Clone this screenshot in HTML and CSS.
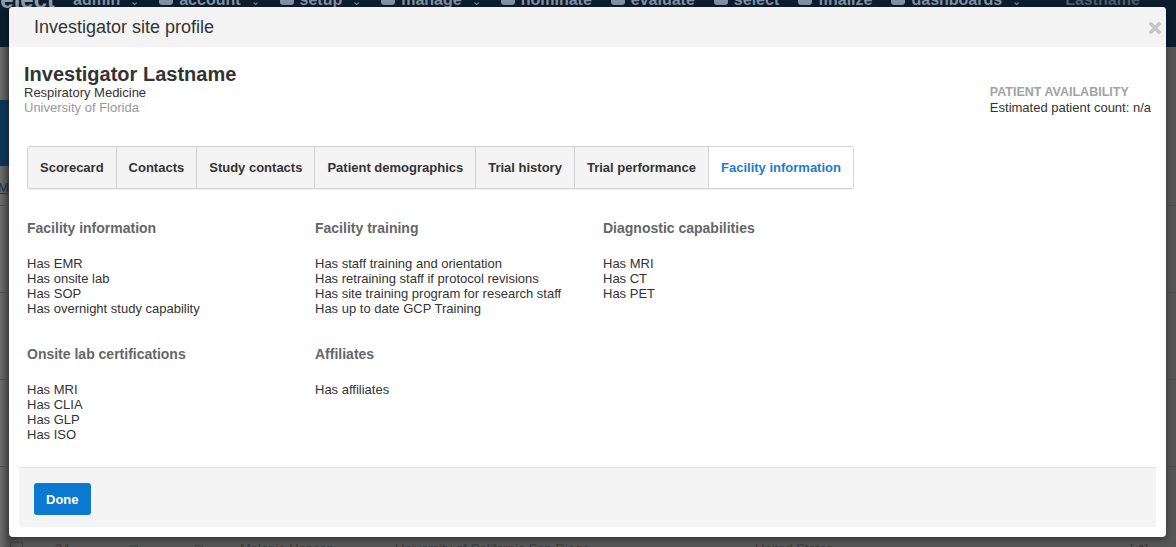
FILE: index.html
```html
<!DOCTYPE html>
<html lang="en">
<head>
<meta charset="utf-8">
<title>Investigator site profile</title>
<link rel="stylesheet" href="styles.css">
</head>
<body>
<div class="page">
  <header class="topnav">
    <div class="navrow">
      <span class="logo">select</span>
      <span class="nav-item">admin <span class="chev">&#8964;</span></span>
      <span class="nav-item"><span class="nav-ico"></span>account <span class="chev">&#8964;</span></span>
      <span class="nav-item"><span class="nav-ico"></span>setup <span class="chev">&#8964;</span></span>
      <span class="nav-item"><span class="nav-ico"></span>manage <span class="chev">&#8964;</span></span>
      <span class="nav-item"><span class="nav-ico"></span>nominate</span>
      <span class="nav-item"><span class="nav-ico"></span>evaluate</span>
      <span class="nav-item"><span class="nav-ico"></span>select</span>
      <span class="nav-item"><span class="nav-ico"></span>finalize</span>
      <span class="nav-item"><span class="nav-ico"></span>dashboards <span class="chev">&#8964;</span></span>
      <span class="nav-user">Lastname</span>
      <span class="avatar">LK</span>
    </div>
  </header>
  <div class="page-body">
    <div class="banner"></div>
    <div class="subtabs"><span class="sub-link">My sites</span></div>
    <div class="bg-rows">
      <div class="bg-row"></div>
      <div class="bg-row"></div>
      <div class="bg-row"></div>
    </div>
    <div class="table-row">
      <span class="cb"></span>
      <span class="tcell c1">24</span>
      <span class="tcell c2">&#9633;</span>
      <span class="tcell c3">&#9633;</span>
      <span class="tcell c4">Melanie Hansen</span>
      <span class="tcell c5">University of California San Diego</span>
      <span class="tcell c6">United States</span>
      <span class="tcell c7">[&#8599;]</span>
    </div>
  </div>
</div>

<div class="modal" role="dialog" aria-labelledby="modal-title">
  <div class="modal-header">
    <h1 class="modal-title" id="modal-title">Investigator site profile</h1>
    <button class="close" aria-label="Close">
      <svg width="12" height="12" viewBox="0 0 12 12" aria-hidden="true">
        <path d="M2 2 L10 10 M10 2 L2 10" stroke="#c6c6c6" stroke-width="3.4" stroke-linecap="square" fill="none"/>
      </svg>
    </button>
  </div>

  <div class="modal-body">
    <div class="profile">
      <div class="who">
        <div class="name">Investigator Lastname</div>
        <div class="dept">Respiratory Medicine</div>
        <div class="inst">University of Florida</div>
      </div>
      <div class="availability">
        <div class="avail-label">PATIENT AVAILABILITY</div>
        <div class="avail-value">Estimated patient count: n/a</div>
      </div>
    </div>

    <nav class="tabs">
      <span class="tab">Scorecard</span>
      <span class="tab">Contacts</span>
      <span class="tab">Study contacts</span>
      <span class="tab">Patient demographics</span>
      <span class="tab">Trial history</span>
      <span class="tab">Trial performance</span>
      <span class="tab active">Facility information</span>
    </nav>

    <div class="sections">
      <section class="sec">
        <h2 class="sec-title">Facility information</h2>
        <ul class="sec-list">
          <li>Has EMR</li>
          <li>Has onsite lab</li>
          <li>Has SOP</li>
          <li>Has overnight study capability</li>
        </ul>
      </section>
      <section class="sec">
        <h2 class="sec-title">Facility training</h2>
        <ul class="sec-list">
          <li>Has staff training and orientation</li>
          <li>Has retraining staff if protocol revisions</li>
          <li>Has site training program for research staff</li>
          <li>Has up to date GCP Training</li>
        </ul>
      </section>
      <section class="sec">
        <h2 class="sec-title">Diagnostic capabilities</h2>
        <ul class="sec-list">
          <li>Has MRI</li>
          <li>Has CT</li>
          <li>Has PET</li>
        </ul>
      </section>
      <section class="sec">
        <h2 class="sec-title">Onsite lab certifications</h2>
        <ul class="sec-list">
          <li>Has MRI</li>
          <li>Has CLIA</li>
          <li>Has GLP</li>
          <li>Has ISO</li>
        </ul>
      </section>
      <section class="sec">
        <h2 class="sec-title">Affiliates</h2>
        <ul class="sec-list">
          <li>Has affiliates</li>
        </ul>
      </section>
    </div>
  </div>

  <div class="modal-footer">
    <button class="btn-done">Done</button>
  </div>
</div>
</body>
</html>
```

FILE: styles.css
```css
* { box-sizing: border-box; }

html, body {
  margin: 0;
  padding: 0;
  height: 547px;
  overflow: hidden;
}

body {
  background: #585858;
  font-family: "Liberation Sans", Arial, sans-serif;
  position: relative;
}

/* ---------- backdrop page (dimmed) ---------- */
.page {
  height: 547px;
  display: flex;
  flex-direction: column;
}

.topnav {
  height: 47px;
  background: #0c1d2e;
  overflow: hidden;
  flex: none;
}

.navrow {
  display: flex;
  align-items: flex-start;
  margin-top: -8px;
  color: #8191a3;
  font-weight: bold;
  font-size: 16px;
  line-height: 16px;
  white-space: nowrap;
}

.logo {
  font-size: 24px;
  color: #8c9db0;
  margin-left: -13px;
  margin-right: 18px;
}

.nav-item {
  display: inline-flex;
  align-items: baseline;
  gap: 6px;
  margin-right: 19px;
}

.nav-ico {
  display: inline-block;
  width: 14px;
  height: 10px;
  background: #8191a3;
  border-radius: 3px;
}

.chev {
  display: inline-block;
  width: 10px;
  overflow: hidden;
  font-size: 11px;
  font-weight: normal;
  margin-left: 4px;
}

.nav-user {
  margin-left: 24px;
  color: #4f5e6e;
}

.avatar {
  margin-left: 40px;
  margin-top: -14px;
  width: 36px;
  height: 36px;
  border-radius: 50%;
  background: #12497a;
  color: #7fa0c0;
  font-size: 14px;
  line-height: 14px;
  display: inline-flex;
  align-items: flex-end;
  justify-content: center;
}

.page-body {
  flex: 1;
  display: flex;
  flex-direction: column;
  background: linear-gradient(90deg, #6c6c6c 0, #4a4a4a 9px, #555 20px);
}

.banner {
  margin-top: 53px;
  height: 66px;
  width: 40%;
  background: #0d3254;
  flex: none;
}

.subtabs {
  padding-top: 12px;
  height: 40px;
  border-bottom: 1px solid #4d4d4d;
  flex: none;
}

.sub-link {
  color: #1b2f46;
  font-size: 13px;
  text-decoration: underline;
  margin-left: -2px;
}

.bg-rows {
  flex: 1;
  display: flex;
  flex-direction: column;
}

.bg-row {
  height: 87px;
  border-bottom: 1px solid #4c4c4c;
}

.table-row {
  flex: none;
  height: 10px;
  display: flex;
  align-items: flex-start;
  padding-top: 5px;
  color: #3a3a3a;
  font-size: 13px;
  line-height: 13px;
  white-space: nowrap;
  overflow: hidden;
}

.cb {
  width: 13px;
  height: 13px;
  border: 1px solid #3e3e3e;
  margin-left: 10px;
}

.tcell { display: inline-block; }
.c1 { margin-left: 32px; width: 60px; }
.c2 { margin-left: 15px; width: 65px; }
.c3 { width: 45px; }
.c4 { width: 155px; }
.c5 { width: 360px; }
.c6 { width: 375px; }

/* ---------- modal ---------- */
.modal {
  position: absolute;
  top: 7px;
  left: 9px;
  width: 1157px;
  height: 530px;
  background: #fff;
  border-radius: 4px;
  box-shadow: 0 2px 6px rgba(0, 0, 0, 0.4);
  display: flex;
  flex-direction: column;
  overflow: hidden;
}

.modal-header {
  height: 40px;
  flex: none;
  background: #f3f3f3;
  display: flex;
  align-items: center;
  justify-content: space-between;
  padding: 0 5px 0 25px;
}

.modal-title {
  margin: 0;
  font-size: 18px;
  font-weight: normal;
  color: #333;
  line-height: 22px;
}

.close {
  border: 0;
  background: none;
  padding: 0;
  width: 12px;
  height: 12px;
  margin-top: 2px;
  display: flex;
}

.modal-body {
  flex: 1;
  padding: 16px 15px 0 15px;
}

.profile {
  display: flex;
  justify-content: space-between;
  align-items: flex-end;
}

.name {
  font-size: 20px;
  font-weight: bold;
  line-height: 22px;
  color: #333;
}

.dept, .inst, .avail-value {
  font-size: 13px;
  line-height: 15px;
  color: #333;
}

.inst { color: #999; }

.avail-label {
  font-size: 12.5px;
  font-weight: bold;
  line-height: 15px;
  color: #a3a3a3;
}

.tabs {
  display: inline-flex;
  margin: 31px 0 0 3px;
  border: 1px solid #d3d3d3;
  border-radius: 3px;
  background: #f4f4f4;
  box-shadow: 0 1px 1px rgba(0, 0, 0, 0.06);
  overflow: hidden;
}

.tab {
  padding: 0 12px;
  line-height: 41px;
  font-size: 13px;
  font-weight: bold;
  color: #333;
  border-left: 1px solid #d3d3d3;
  white-space: nowrap;
}

.tab:first-child { border-left: 0; }

.tab.active {
  background: #fff;
  color: #1b7dd0;
}

.sections {
  display: grid;
  grid-template-columns: repeat(3, 288px);
  row-gap: 30px;
  margin: 31px 0 0 3px;
}

.sec-title {
  margin: 0 0 20px;
  font-size: 14px;
  line-height: 16px;
  font-weight: bold;
  color: #666;
}

.sec-list {
  list-style: none;
  margin: 0;
  padding: 0;
  font-size: 13px;
  line-height: 15px;
  color: #333;
}

.modal-footer {
  flex: none;
  margin: 0 10px 10px;
  background: #f4f4f4;
  border-top: 1px solid #e3e3e3;
  padding: 15px 15px 12px;
  display: flex;
}

.btn-done {
  height: 32px;
  padding: 0 12px;
  border: 0;
  border-radius: 3px;
  background: #0b79cf;
  color: #fff;
  font-family: "Liberation Sans", Arial, sans-serif;
  font-size: 13px;
  font-weight: bold;
}
```
